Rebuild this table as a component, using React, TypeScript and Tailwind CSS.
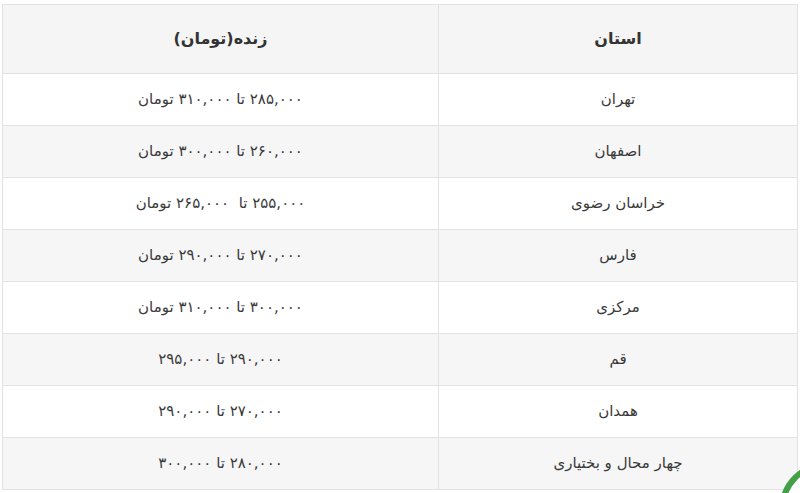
const rows = [
  { province: 'تهران', price: '۲۸۵,۰۰۰ تا ۳۱۰,۰۰۰ تومان' },
  { province: 'اصفهان', price: '۲۶۰,۰۰۰ تا ۳۰۰,۰۰۰ تومان' },
  { province: 'خراسان رضوی', price: '۲۵۵,۰۰۰ تا  ۲۶۵,۰۰۰ تومان' },
  { province: 'فارس', price: '۲۷۰,۰۰۰ تا ۲۹۰,۰۰۰ تومان' },
  { province: 'مرکزی', price: '۳۰۰,۰۰۰ تا ۳۱۰,۰۰۰ تومان' },
  { province: 'قم', price: '۲۹۰,۰۰۰ تا ۲۹۵,۰۰۰' },
  { province: 'همدان', price: '۲۷۰,۰۰۰ تا ۲۹۰,۰۰۰' },
  { province: 'چهار محال و بختیاری', price: '۲۸۰,۰۰۰ تا ۳۰۰,۰۰۰' },
]

export default function App() {
  return (
    <div className="relative w-[800px] h-[493px] overflow-hidden bg-white pt-[4px] pl-[2px] font-['DejaVu_Sans',sans-serif] text-[#3a3a3a]">
      <table dir="rtl" className="w-[795px] border-collapse table-fixed">
        <colgroup>
          <col className="w-[359px]" />
          <col className="w-[436px]" />
        </colgroup>
        <thead>
          <tr className="h-[69px] bg-[#f5f5f5]">
            <th className="border border-[#e2e2e2] text-[16px] font-bold text-[#333]">استان</th>
            <th className="border border-[#e2e2e2] text-[16px] font-bold text-[#333]">زنده(تومان)</th>
          </tr>
        </thead>
        <tbody>
          {rows.map((r, i) => (
            <tr key={r.province} className={`h-[52px] ${i % 2 === 1 ? 'bg-[#f6f6f6]' : 'bg-white'}`}>
              <td className="border border-[#e2e2e2] text-center text-[15px]">{r.province}</td>
              <td className="border border-[#e2e2e2] text-center text-[15px] whitespace-pre">{r.price}</td>
            </tr>
          ))}
        </tbody>
      </table>

      {/* floating button peeking in at the corner */}
      <div className="absolute left-[779px] top-[461px] w-[98px] h-[98px] rounded-full border-[6px] border-[#43a047] bg-white" />
    </div>
  )
}
